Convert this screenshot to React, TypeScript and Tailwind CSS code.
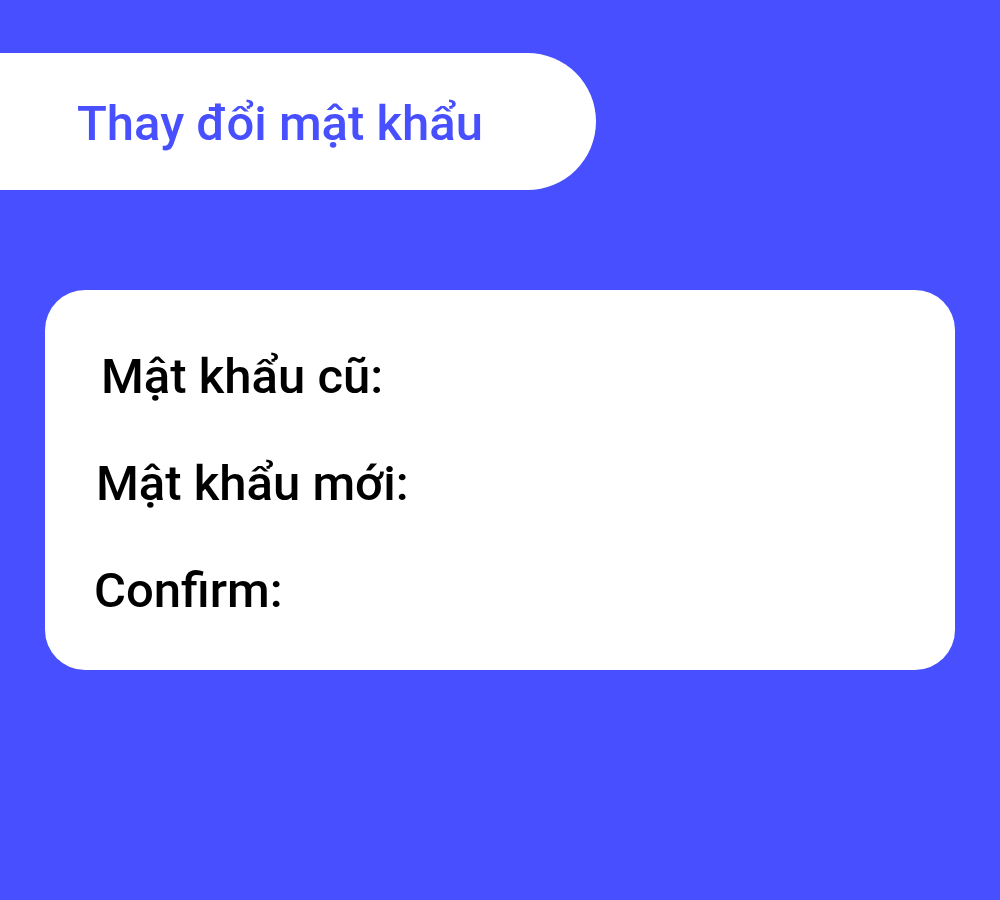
const labels = [
  { text: "Mật khẩu cũ:", cls: "pl-[56px]" },
  { text: "Mật khẩu mới:", cls: "pl-[51px]" },
  { text: "Confirm:", cls: "pl-[49px]" },
];

export default function App() {
  return (
    <div
      className="min-h-[900px] w-[1000px] bg-[#474ffe] pt-[53px]"
      style={{ fontFamily: "Roboto, 'Noto Sans', sans-serif" }}
    >
      <div className="flex h-[137px] w-[596px] items-center rounded-r-full bg-white pt-[4px] pl-[77px]">
        <h1 className="text-[49px] leading-none font-medium text-[#474ffe]">Thay đổi mật khẩu</h1>
      </div>

      <div className="mx-[45px] mt-[100px] flex h-[380px] flex-col gap-[58px] rounded-[40px] bg-white pt-[62px]">
        {labels.map((item) => (
          <label
            key={item.text}
            className={`block text-[49px] leading-[49px] font-medium text-black ${item.cls}`}
          >
            {item.text}
          </label>
        ))}
      </div>
    </div>
  );
}
